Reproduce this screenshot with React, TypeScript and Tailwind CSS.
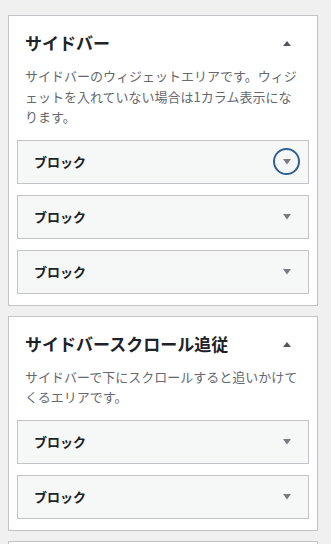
import React from "react";

const font = { fontFamily: '"Noto Sans CJK JP", "Noto Sans", sans-serif' };

function UpArrow() {
  return (
    <svg width="10" height="6" viewBox="0 0 10 6" className="block">
      <path d="M1 6 L5 1 L9 6 Z" fill="#50575e" />
    </svg>
  );
}

function DownArrow() {
  return (
    <svg width="10" height="6" viewBox="0 0 10 6" className="block">
      <path d="M1 0 L9 0 L5 5.5 Z" fill="#787c82" />
    </svg>
  );
}

function Row({ focused }: { focused?: boolean }) {
  return (
    <div className="flex h-[44px] items-center justify-between border border-[#c3c4c7] bg-[#f6f7f7] pl-[16px] pr-[8px]">
      <span className="text-[13px] font-bold leading-none text-[#1d2327]">ブロック</span>
      <div
        className={
          "flex h-[27px] w-[27px] items-center justify-center rounded-full " +
          (focused ? "border-2 border-[#2f6192]" : "border-2 border-transparent")
        }
      >
        <DownArrow />
      </div>
    </div>
  );
}

function Card({ title, desc, rows, focusFirst }: { title: string; desc: string; rows: number; focusFirst?: boolean }) {
  return (
    <div className="border border-[#c3c4c7] bg-white px-[8px] pb-[11px] pt-[15px]">
      <div className="flex h-[24px] items-center justify-between pl-[8px] pr-[17px]">
        <h2 className="text-[17px] font-bold leading-[24px] text-[#1d2327]">{title}</h2>
        <UpArrow />
      </div>
      <p className="mt-[11px] pl-[8px] pr-[10px] text-[13px] leading-[20.5px] text-[#646970]">{desc}</p>
      <div className="mt-[12px] flex flex-col gap-[11px]">
        {Array.from({ length: rows }).map((_, i) => (
          <Row key={i} focused={focusFirst && i === 0} />
        ))}
      </div>
    </div>
  );
}

export default function App() {
  return (
    <div className="h-[544px] w-[331px] overflow-hidden bg-[#f0f0f1] pl-[8px] pr-[13px] pt-[15px]" style={font}>
      <div className="flex flex-col gap-[10px]">
        <Card
          title="サイドバー"
          desc="サイドバーのウィジェットエリアです。ウィジェットを入れていない場合は1カラム表示になります。"
          rows={3}
          focusFirst
        />
        <Card
          title="サイドバースクロール追従"
          desc="サイドバーで下にスクロールすると追いかけてくるエリアです。"
          rows={2}
        />
        <div className="h-[40px] border border-[#c3c4c7] bg-white" />
      </div>
    </div>
  );
}
